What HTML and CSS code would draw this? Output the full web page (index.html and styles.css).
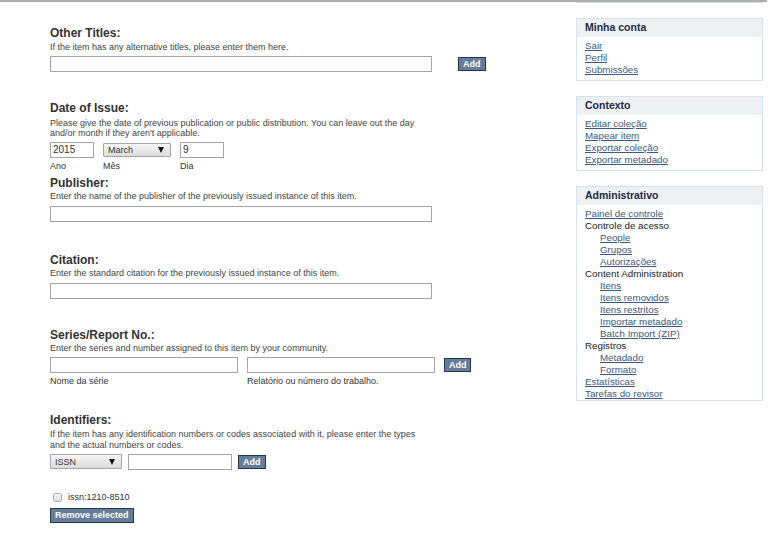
FILE: index.html
```html
<!DOCTYPE html>
<html lang="pt">
<head>
<meta charset="utf-8">
<title>Submissão</title>
<link rel="stylesheet" href="styles.css">
</head>
<body>
<div class="top-rule"></div>
<div class="layout">
  <main class="main">
    <div class="field field--first">
      <h2 class="label">Other Titles:</h2>
      <p class="help">If the item has any alternative titles, please enter them here.</p>
      <div class="row row--titles">
        <input class="text text--wide" type="text">
        <button class="btn" type="button">Add</button>
      </div>
    </div>

    <div class="field">
      <h2 class="label">Date of Issue:</h2>
      <p class="help help--two">Please give the date of previous publication or public distribution. You can leave out the day and/or month if they aren't applicable.</p>
      <div class="grid grid--date">
        <input class="text" type="text" value="2015">
        <div class="select"><span>March</span><span class="arrow"></span></div>
        <input class="text" type="text" value="9">
        <span class="sub">Ano</span>
        <span class="sub">Mês</span>
        <span class="sub">Dia</span>
      </div>
    </div>

    <div class="field field--close">
      <h2 class="label">Publisher:</h2>
      <p class="help">Enter the name of the publisher of the previously issued instance of this item.</p>
      <div class="row">
        <input class="text text--wide" type="text">
      </div>
    </div>

    <div class="field field--wide-gap">
      <h2 class="label">Citation:</h2>
      <p class="help">Enter the standard citation for the previously issued instance of this item.</p>
      <div class="row">
        <input class="text text--wide" type="text">
      </div>
    </div>

    <div class="field">
      <h2 class="label">Series/Report No.:</h2>
      <p class="help">Enter the series and number assigned to this item by your community.</p>
      <div class="grid grid--series">
        <input class="text" type="text">
        <input class="text" type="text">
        <button class="btn" type="button">Add</button>
        <span class="sub">Nome da série</span>
        <span class="sub">Relatório ou número do trabalho.</span>
      </div>
    </div>

    <div class="field field--ident">
      <h2 class="label">Identifiers:</h2>
      <p class="help help--two">If the item has any identification numbers or codes associated with it, please enter the types and the actual numbers or codes.</p>
      <div class="row row--ident">
        <div class="select select--issn"><span>ISSN</span><span class="arrow"></span></div>
        <input class="text text--ident" type="text">
        <button class="btn" type="button">Add</button>
      </div>
      <label class="check-row"><span class="checkbox"></span><span>issn:1210-8510</span></label>
      <button class="btn btn--remove" type="button">Remove selected</button>
    </div>
  </main>

  <aside class="sidebar">
    <div class="box-remnant"></div>
    <section class="box">
      <h3 class="box-title">Minha conta</h3>
      <ul class="links">
        <li><a href="#">Sair</a></li>
        <li><a href="#">Perfil</a></li>
        <li><a href="#">Submissões</a></li>
      </ul>
    </section>
    <section class="box">
      <h3 class="box-title">Contexto</h3>
      <ul class="links">
        <li><a href="#">Editar coleção</a></li>
        <li><a href="#">Mapear item</a></li>
        <li><a href="#">Exportar coleção</a></li>
        <li><a href="#">Exportar metadado</a></li>
      </ul>
    </section>
    <section class="box box--admin">
      <h3 class="box-title">Administrativo</h3>
      <ul class="links">
        <li><a href="#">Painel de controle</a></li>
        <li>Controle de acesso
          <ul class="links links--sub">
            <li><a href="#">People</a></li>
            <li><a href="#">Grupos</a></li>
            <li><a href="#">Autorizações</a></li>
          </ul>
        </li>
        <li>Content Administration
          <ul class="links links--sub">
            <li><a href="#">Itens</a></li>
            <li><a href="#">Itens removidos</a></li>
            <li><a href="#">Itens restritos</a></li>
            <li><a href="#">Importar metadado</a></li>
            <li><a href="#">Batch Import (ZIP)</a></li>
          </ul>
        </li>
        <li>Registros
          <ul class="links links--sub">
            <li><a href="#">Metadado</a></li>
            <li><a href="#">Formato</a></li>
          </ul>
        </li>
        <li><a href="#">Estatísticas</a></li>
        <li><a href="#">Tarefas do revisor</a></li>
      </ul>
    </section>
  </aside>
</div>
</body>
</html>
```
FILE: styles.css
```css
* { box-sizing: border-box; }

html, body {
  margin: 0;
  padding: 0;
  background: #ffffff;
  font-family: "Liberation Sans", Arial, sans-serif;
  color: #333333;
}

.top-rule {
  width: 767px;
  height: 2px;
  background: #acacac;
}

.layout {
  display: flex;
  align-items: flex-start;
}

.main {
  width: 576px;
  padding: 24px 0 0 50px;
}

.field { margin-top: 29px; }
.field--first { margin-top: 0; }
.field--close { margin-top: 4px; }
.field--wide-gap { margin-top: 31px; }
.field--ident { margin-top: 26px; }

.label {
  margin: 0;
  font-size: 12px;
  line-height: 14px;
  font-weight: bold;
  color: #333333;
}

.help {
  margin: 1.5px 0 0;
  font-size: 9px;
  line-height: 10.5px;
  color: #444444;
  width: 372px;
}

.help--two { margin-top: 2.5px; }

.row {
  display: flex;
  align-items: center;
  margin-top: 4px;
}

.row--titles { gap: 26px; }
.row--ident { gap: 6px; margin-top: 3.5px; }

.text {
  height: 16px;
  margin: 0;
  padding: 0 2px;
  border: 1px solid #a5a5a5;
  border-radius: 0;
  background: #ffffff;
  font-family: "Liberation Sans", Arial, sans-serif;
  font-size: 10px;
  color: #333333;
  outline: none;
}

.text--wide { width: 382px; }
.text--ident { width: 104px; }

.grid {
  display: grid;
  align-items: center;
  column-gap: 9px;
  margin-top: 3px;
}

.grid--date { grid-template-columns: 44px 68px 44px; }
.grid--series { grid-template-columns: 188px 188px 27px; }

.grid .text { width: 100%; }

.sub {
  margin-top: 3.5px;
  font-size: 9px;
  line-height: 10.5px;
  color: #333333;
  white-space: nowrap;
}

.select {
  height: 14px;
  display: flex;
  align-items: center;
  justify-content: space-between;
  padding: 0 6px 0 4px;
  border: 1px solid #a6a6a6;
  border-radius: 1px;
  background: linear-gradient(#f6f6f6, #dcdcdc);
  font-size: 9px;
  color: #333333;
}

.select--issn { width: 72px; height: 15px; }

.arrow {
  width: 0;
  height: 0;
  border-left: 3px solid transparent;
  border-right: 3px solid transparent;
  border-top: 6px solid #111111;
}

.btn {
  margin: 0;
  padding: 1px 4px;
  border: 1px solid #24374f;
  border-radius: 0;
  background: #657d98;
  color: #ffffff;
  font-family: "Liberation Sans", Arial, sans-serif;
  font-size: 9px;
  font-weight: bold;
  line-height: 10px;
  height: 14px;
  white-space: nowrap;
  cursor: pointer;
}

.check-row {
  display: flex;
  align-items: center;
  gap: 6px;
  margin-top: 22.5px;
  padding-left: 3px;
  font-size: 9px;
  line-height: 10.5px;
  color: #333333;
}

.checkbox {
  width: 9px;
  height: 9px;
  border: 1px solid #b4b4b4;
  border-radius: 2px;
  background: linear-gradient(#f4f4f4, #dedede);
}

.btn--remove {
  display: block;
  margin-top: 5px;
  height: 15px;
}

/* Sidebar */
.sidebar {
  width: 187px;
}

.box-remnant {
  height: 1px;
  border: 1px solid #d6e4e9;
  border-top: 0;
  background: #f3f7f9;
  margin-bottom: 15px;
}

.box {
  border: 1px solid #d6e4e9;
  margin-bottom: 15px;
  padding-bottom: 4px;
  background: #ffffff;
}

.box--admin { padding-bottom: 0; }

.box-title {
  margin: 0;
  height: 18px;
  padding: 0 8px;
  background: #eef0f4;
  font-size: 10.5px;
  line-height: 17px;
  font-weight: bold;
  color: #1e2c45;
}

.links {
  list-style: none;
  margin: 0;
  padding: 3px 8px 0;
  font-size: 9.75px;
  line-height: 12px;
  color: #222222;
}

.links--sub {
  padding: 0 0 0 15px;
}

.links a {
  color: #40597c;
  text-decoration: underline;
}
```
